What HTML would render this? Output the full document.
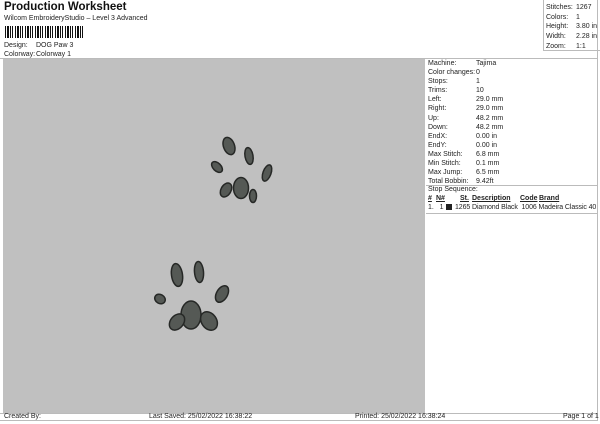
<!DOCTYPE html><html><head><style>
body{margin:0;width:600px;height:424px;background:#fff;position:relative;overflow:hidden;font-family:"Liberation Sans",sans-serif;font-size:7px;color:#222}
.a{position:absolute;white-space:nowrap}
</style></head><body>
<div class="a" style="left:4px;top:1px;font-size:11.5px;font-weight:bold;color:#111">Production Worksheet</div>
<div class="a" style="left:4px;top:15px">Wilcom EmbroideryStudio – Level 3 Advanced</div>
<div class="a" style="left:5px;top:26px;width:78px;height:12px;background:repeating-linear-gradient(90deg,#111 0 1px,#fff 1px 2px,#111 2px 4px,#fff 4px 5px,#111 5px 6px,#fff 6px 7px,#111 7px 8px,#fff 8px 10px)"></div>
<div class="a" style="left:4px;top:42px">Design:</div><div class="a" style="left:36px;top:42px">DOG Paw 3</div>
<div class="a" style="left:4px;top:51px">Colorway:</div><div class="a" style="left:36px;top:51px">Colorway 1</div>
<div class="a" style="left:0;top:0;width:598px;height:421px;border:1px solid #bbb;box-sizing:border-box;border-width:0 1px 1px 0"></div>
<div class="a" style="left:543px;top:0;width:56px;height:50px;border-left:1px solid #bbb;border-bottom:1px solid #bbb"></div>
<div class="a" style="left:546px;top:3px;line-height:9.7px">Stitches:<br>Colors:<br>Height:<br>Width:<br>Zoom:</div>
<div class="a" style="left:576px;top:3px;line-height:9.7px">1267<br>1<br>3.80 in<br>2.28 in<br>1:1</div>
<div class="a" style="left:3px;top:59px;width:422px;height:354px;background:#c0c0c0"></div>
<div class="a" style="left:0;top:58px;width:598px;border-top:1px solid #bbb"></div>
<div class="a" style="left:428px;top:59px;line-height:9.1px">Machine:<br>Color changes:<br>Stops:<br>Trims:<br>Left:<br>Right:<br>Up:<br>Down:<br>EndX:<br>EndY:<br>Max Stitch:<br>Min Stitch:<br>Max Jump:<br>Total Bobbin:</div>
<div class="a" style="left:476px;top:59px;line-height:9.1px">Tajima<br>0<br>1<br>10<br>29.0 mm<br>29.0 mm<br>48.2 mm<br>48.2 mm<br>0.00 in<br>0.00 in<br>6.8 mm<br>0.1 mm<br>6.5 mm<br>9.42ft</div>
<div class="a" style="left:426px;top:185px;width:172px;border-top:1px solid #bbb"></div>
<div class="a" style="left:428px;top:186px">Stop Sequence:</div>
<div class="a" style="left:428px;top:195px;font-weight:bold;text-decoration:underline">#</div>
<div class="a" style="left:436px;top:195px;font-weight:bold;text-decoration:underline">N#</div>
<div class="a" style="left:460px;top:195px;font-weight:bold;text-decoration:underline">St.</div>
<div class="a" style="left:472px;top:195px;font-weight:bold;text-decoration:underline">Description</div>
<div class="a" style="left:520px;top:195px;font-weight:bold;text-decoration:underline">Code</div>
<div class="a" style="left:539px;top:195px;font-weight:bold;text-decoration:underline">Brand</div>
<div class="a" style="left:428px;top:204px">1.&nbsp;&nbsp; 1</div>
<div class="a" style="left:446px;top:204px;width:6px;height:6px;background:#222"></div>
<div class="a" style="left:455px;top:204px;letter-spacing:-0.1px">1265 Diamond Black&nbsp; 1006 Madeira Classic 40</div>
<div class="a" style="left:426px;top:213px;width:172px;border-top:1px solid #bbb"></div>
<div class="a" style="left:0;top:413px;width:598px;border-top:1px solid #bbb"></div>
<div class="a" style="left:4px;top:413px">Created By:</div>
<div class="a" style="left:149px;top:413px">Last Saved: 25/02/2022 16:38:22</div>
<div class="a" style="left:355px;top:413px">Printed: 25/02/2022 16:38:24</div>
<div class="a" style="left:563px;top:413px">Page 1 of 1</div>
<svg class="a" style="left:0;top:0" width="600" height="424">
<g fill="#555955" stroke="#262826" stroke-width="1.5">
<g transform="translate(200,130)">
<ellipse cx="29" cy="16" rx="5.5" ry="9" transform="rotate(-20 29 16)"/>
<ellipse cx="49" cy="26" rx="4" ry="8.5" transform="rotate(-10 49 26)"/>
<ellipse cx="17" cy="37" rx="4" ry="6.5" transform="rotate(-45 17 37)"/>
<ellipse cx="67" cy="43" rx="4" ry="8.5" transform="rotate(20 67 43)"/>
<ellipse cx="41" cy="58" rx="7.5" ry="10.5"/>
<ellipse cx="26" cy="60" rx="5" ry="7.5" transform="rotate(30 26 60)"/>
<ellipse cx="53" cy="66" rx="3.5" ry="6.5"/>
</g>
<g transform="translate(145,255)">
<ellipse cx="32" cy="20" rx="5.5" ry="11.5" transform="rotate(-8 32 20)"/>
<ellipse cx="54" cy="17" rx="4.5" ry="10.5" transform="rotate(-5 54 17)"/>
<ellipse cx="15" cy="44" rx="5.5" ry="4.5" transform="rotate(30 15 44)"/>
<ellipse cx="77" cy="39" rx="5.5" ry="9" transform="rotate(30 77 39)"/>
<ellipse cx="46" cy="60" rx="10" ry="14"/>
<ellipse cx="32" cy="67" rx="6.5" ry="9" transform="rotate(40 32 67)"/>
<ellipse cx="64" cy="66" rx="7.5" ry="10" transform="rotate(-35 64 66)"/>
</g></g></svg>
</body></html>
